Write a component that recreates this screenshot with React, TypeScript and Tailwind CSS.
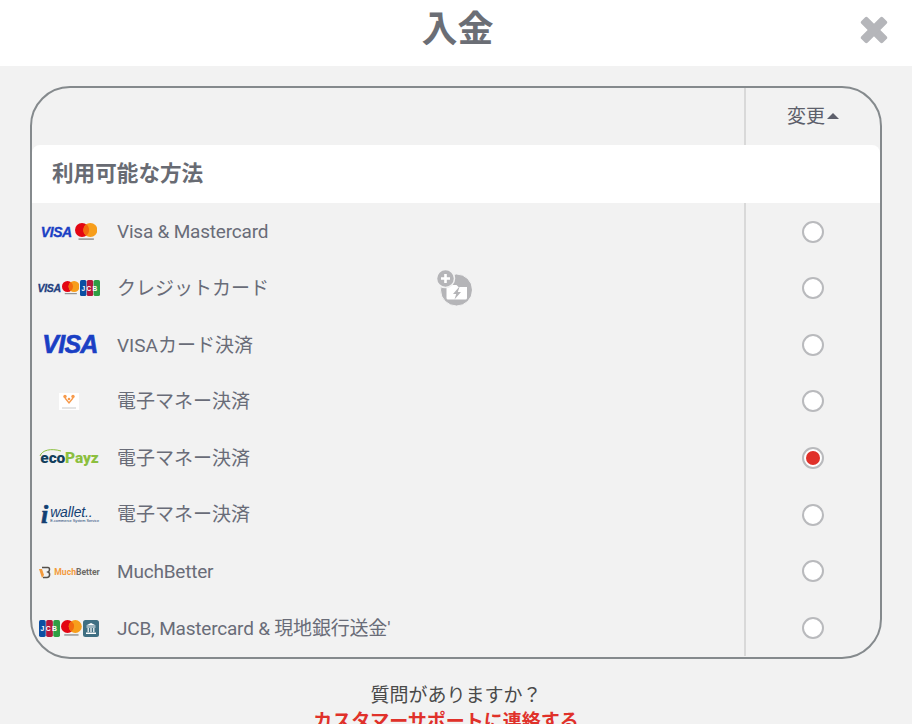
import React from "react";

const jp = "font-['Roboto','Noto_Sans_CJK_JP',sans-serif]";

function VisaText({ size, color = "#1a3fc4" }: { size: number; color?: string }) {
  return (
    <span
      className="font-['Liberation_Sans'] font-bold italic leading-none tracking-[-0.03em]"
      style={{ fontSize: size, color, WebkitTextStroke: `${size / 40}px ${color}` }}
    >
      VISA
    </span>
  );
}

function McMark({ d }: { d: number }) {
  return (
    <svg width={d * 1.6} height={d * 1.25} viewBox="0 0 32 25">
      <circle cx="10" cy="10" r="10" fill="#e30613" />
      <circle cx="22" cy="10" r="10" fill="#f79e1b" />
      <path d="M16 1.900a10 10 0 0 1 0 16.200a10 10 0 0 1 0-16.200z" fill="#f26a0f" />
      <rect x="5" y="22" width="22" height="2" fill="#8a8a8a" />
    </svg>
  );
}

function Jcb({ w, h }: { w: number; h: number }) {
  return (
    <svg width={w} height={h} viewBox="0 0 20 16">
      <rect x="0" y="0" width="6.400" height="16" rx="1.600" fill="#0b4ea2" />
      <rect x="6.800" y="0" width="6.400" height="16" rx="1.600" fill="#b5173b" />
      <rect x="13.600" y="0" width="6.400" height="16" rx="1.600" fill="#2f9e44" />
      <text x="10" y="10.500" textAnchor="middle" fontFamily="Liberation Sans" fontWeight="700" fontSize="6.500" letterSpacing="1.400" fill="#fff">
        JCB
      </text>
    </svg>
  );
}

function Bank() {
  return (
    <svg width="16" height="17" viewBox="0 0 16 17">
      <rect width="16" height="17" rx="2.500" fill="#3f6f82" />
      <path d="M8 3 13 5.600H3z M3.500 6.500h9v1h-9z M3 12.500h10v1.400H3z" fill="#fff" />
      <path d="M4.600 8h1.200v4H4.600z M7.400 8h1.200v4H7.400z M10.200 8h1.200v4h-1.200z" fill="#fff" />
    </svg>
  );
}

function LogoVisaMc() {
  return (
    <div className="mr-[2px] flex items-center gap-[3px]">
      <VisaText size={14} />
      <McMark d={14} />
    </div>
  );
}

function LogoTriple() {
  return (
    <div className="mr-[2px] flex items-center gap-[1px]">
      <VisaText size={10.500} color="#23407f" />
      <McMark d={11} />
      <Jcb w={20} h={16} />
    </div>
  );
}

function LogoSticpay() {
  return (
    <svg className="mr-[2px]" width="20" height="17" viewBox="0 0 20 17">
      <rect width="20" height="17" fill="#fff" />
      <path d="M6 5 10 10l4-5" fill="none" stroke="#f79a4b" strokeWidth="1.400" />
      <circle cx="6" cy="3.500" r="1.700" fill="#f79a4b" />
      <circle cx="14" cy="3.500" r="1.700" fill="#f79a4b" />
      <circle cx="10" cy="6" r="1.300" fill="#f79a4b" />
      <rect x="3" y="14.500" width="14" height="1" fill="#c9c9c9" />
    </svg>
  );
}

function LogoEco() {
  return (
    <div className="relative mr-[1px] flex items-baseline pt-[2px] font-['Roboto'] text-[15.500px] font-black leading-none tracking-[-0.01em]">
      <span className="text-[#123f5c]">eco</span>
      <span className="text-[#8cbf3f]">Payz</span>
      <svg className="absolute left-[-1px] top-[-1px]" width="26" height="10" viewBox="0 0 26 10">
        <path d="M1 8C3 2 12 0 22 3" fill="none" stroke="#8cbf3f" strokeWidth="1" />
      </svg>
    </div>
  );
}

function LogoIwallet() {
  return (
    <div className="flex items-center gap-[2px] pt-[1px]">
      <span className="font-['Liberation_Serif'] text-[26px] font-bold italic leading-none text-[#123f72] [-webkit-text-stroke:0.6px_#123f72]">i</span>
      <div className="flex flex-col">
        <span className="font-['Liberation_Sans'] text-[14px] italic leading-[13px] tracking-[-0.01em] whitespace-nowrap text-[#123f72]">wallet..</span>
        <span className="font-['Liberation_Sans'] text-[3.800px] leading-[5px] whitespace-nowrap text-[#123f72]">E-commerce System Service</span>
      </div>
    </div>
  );
}

function LogoMuch() {
  return (
    <div className="mr-[2px] flex items-center gap-[3px] pt-[2px]">
      <svg width="13" height="13" viewBox="0 0 13 13">
        <path d="M1 3h3l2 6-2 3z" fill="#f39a3c" />
        <path d="M4 1.500h6c2 0 2 3.500 0 4.500 2.500 1 2 5.500-1 5.500H5" fill="none" stroke="#55504a" strokeWidth="1.500" />
      </svg>
      <span className="font-['Roboto'] text-[8.600px] font-bold leading-none">
        <span className="text-[#f39a3c]">Much</span>
        <span className="text-[#6d6a66]">Better</span>
      </span>
    </div>
  );
}

function LogoJcbMcBank() {
  return (
    <div className="mr-[2px] flex items-center gap-[1px] pt-[1px]">
      <Jcb w={21} h={17} />
      <McMark d={13} />
      <Bank />
    </div>
  );
}

const rows = [
  { logo: <LogoVisaMc />, label: "Visa & Mastercard", tight: true },
  { logo: <LogoTriple />, label: "クレジットカード", bonus: true },
  { logo: <VisaText size={25} />, label: "VISAカード決済" },
  { logo: <LogoSticpay />, label: "電子マネー決済" },
  { logo: <LogoEco />, label: "電子マネー決済", checked: true },
  { logo: <LogoIwallet />, label: "電子マネー決済" },
  { logo: <LogoMuch />, label: "MuchBetter", tight: true },
  { logo: <LogoJcbMcBank />, label: "JCB, Mastercard & 現地銀行送金'", tight: true },
];

function BonusIcon() {
  return (
    <svg width="36" height="38" viewBox="0 0 36 38" className="absolute left-[404px] top-[9px]">
      <circle cx="20.500" cy="21" r="16" fill="#b5b5b8" stroke="#f2f2f2" strokeWidth="1" />
      <path d="M10.500 16h10l2 2H31v11a1.500 1.500 0 0 1-1.500 1.500h-17.500a1.500 1.500 0 0 1-1.500-1.500z" fill="#fff" />
      <path d="M23 18l-6 7h3.200L18.500 30.500l6.500-7.500h-3.200l1.700-5z" fill="#b5b5b8" />
      <circle cx="9.500" cy="9.500" r="9" fill="#b5b5b8" stroke="#f2f2f2" strokeWidth="1.500" />
      <path d="M8.200 5h2.600v3.200H14v2.600h-3.200V14H8.200v-3.200H5V8.200h3.200z" fill="#fff" />
    </svg>
  );
}

export default function App() {
  return (
    <div className={`h-[724px] overflow-hidden bg-[#f2f2f2] ${jp}`}>
      <header className="relative flex h-[66px] items-center justify-center bg-white">
        <h1 className="mb-[6px] ml-[3px] text-[36px] font-bold leading-none text-[#6b6e75]">入金</h1>
        <svg className="absolute left-[860px] top-[16px]" width="28" height="28" viewBox="0 0 28 28">
          <rect x="-1.300" y="9.500" width="30.600" height="9" rx="2" transform="rotate(45 14 14)" fill="#b5b6ba" />
          <rect x="-1.300" y="9.500" width="30.600" height="9" rx="2" transform="rotate(-45 14 14)" fill="#b5b6ba" />
        </svg>
      </header>

      <section className="mx-[30px] mt-[20px] h-[573px] rounded-[40px] border-2 border-[#858a8d]">
        <div className="flex h-[57px] justify-end">
          <div className="flex w-[136px] items-center justify-center gap-[2px] border-l-2 border-[#d9d9d9] pt-[1px] text-[19px] text-[#5d5f6b]">
            変更
            <span className="mb-[2px] h-0 w-0 border-x-[6px] border-b-[6px] border-x-transparent border-b-[#5d5f6b]" />
          </div>
        </div>
        <div className="flex h-[58px] items-center rounded-t-lg bg-white pl-[20px] text-[21.600px] font-bold text-[#686b73]">
          利用可能な方法
        </div>
        <ul className="pt-[0.400px]">
          {rows.map((row, i) => (
            <li key={i} className="relative flex h-[56.600px] items-center">
              <div className="flex w-[76px] justify-center">{row.logo}</div>
              <span className={`ml-[9px] flex-1 pt-[2px] text-[19px] text-[#696c78] ${row.tight ? "tracking-[-0.2px]" : ""}`}>{row.label}</span>
              {row.bonus && <BonusIcon />}
              <div className="flex h-full w-[136px] items-center justify-center border-l-2 border-[#d9d9d9]">
                <span className="flex h-[22px] w-[22px] items-center justify-center rounded-full border-2 border-[#b9babd] bg-white">
                  {row.checked && <span className="h-[14px] w-[14px] rounded-full bg-[#e0312a]" />}
                </span>
              </div>
            </li>
          ))}
        </ul>
      </section>

      <div className="mt-[24px] text-center">
        <p className="text-[19px] leading-[26px] text-[#4a4a4a]">質問がありますか？</p>
        <p className="pr-[20px] text-[19px] font-bold leading-[26px] text-[#e0312a]">カスタマーサポートに連絡する</p>
      </div>
    </div>
  );
}
